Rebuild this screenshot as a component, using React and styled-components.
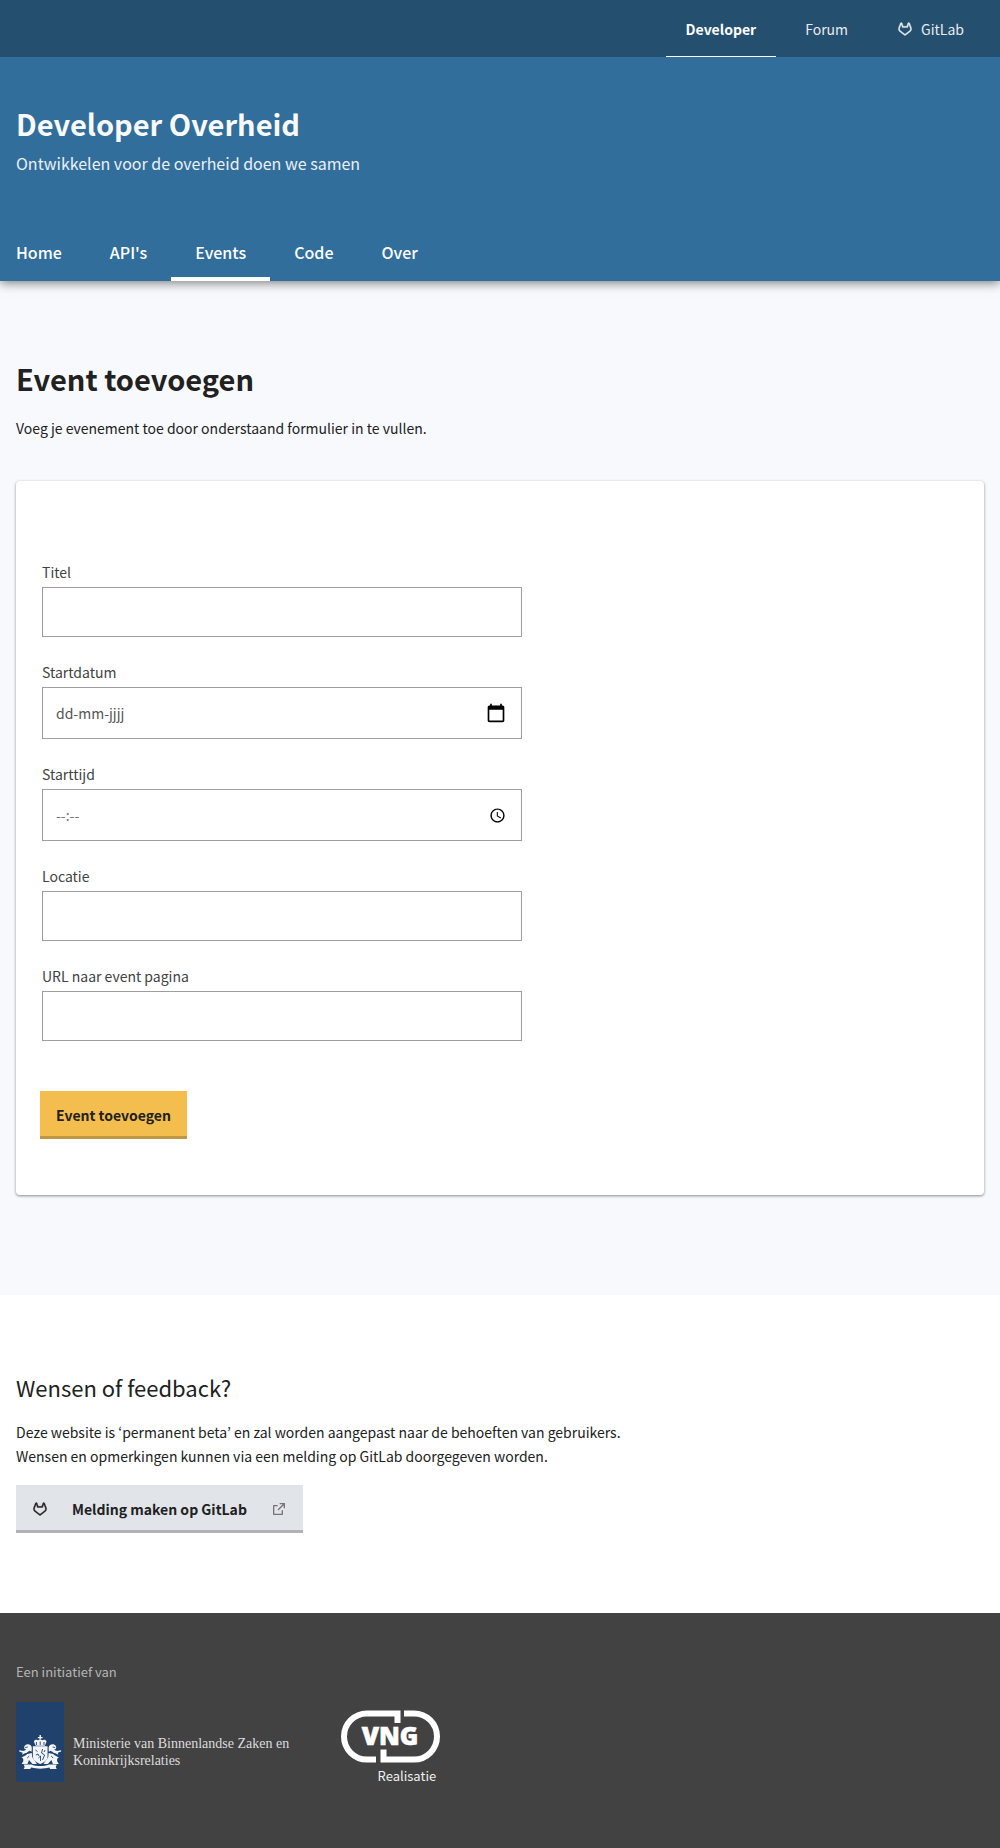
import React from 'react';
import styled, { createGlobalStyle } from 'styled-components';
import { RiGitlabLine, RiExternalLinkLine } from 'react-icons/ri';
import { MdCalendarToday, MdAccessTime } from 'react-icons/md';

const GlobalStyle = createGlobalStyle`
  *, *::before, *::after { box-sizing: border-box; }
  body {
    margin: 0;
    background: #424242;
    color: #212121;
    font: 400 14px/24px "Noto Sans CJK KR", "Open Sans", sans-serif;
  }
  h1, h2, p { margin: 0; }
  a { color: inherit; text-decoration: none; }
  button, input { font: inherit; color: inherit; }
`;

const TopBar = styled.nav`
  position: relative;
  z-index: 1;
  display: flex;
  justify-content: flex-end;
  gap: 9px;
  padding: 0 16px;
  background: #254f6e;
  color: #fff;
`;

const TopLink = styled.a`
  display: flex;
  align-items: center;
  gap: 8px;
  height: 57px;
  padding: 0 20px;
  font-weight: ${(p) => (p.$active ? 600 : 400)};
  color: ${(p) => (p.$active ? '#fff' : '#e6ecf0')};
  box-shadow: ${(p) => (p.$active ? 'inset 0 -1px #fff' : 'none')};
`;

const Header = styled.header`
  position: relative;
  padding: 46px 16px 0;
  background: #316e9c;
  color: #fff;
  box-shadow: 0 2px 10px rgba(0, 0, 0, 0.5);
`;

const SiteTitle = styled.p`
  font-size: 29px;
  line-height: 40px;
  font-weight: 700;
  color: #fafafa;
`;

const Tagline = styled.p`
  margin-top: 8px;
  font-size: 16px;
  color: #eaf0f5;
`;

const MainNav = styled.nav`
  display: flex;
  margin: 48px -24px 0;
`;

const NavLink = styled.a`
  display: flex;
  align-items: center;
  height: 58px;
  padding: 0 24px;
  font-size: 16px;
  font-weight: 500;
  box-shadow: ${(p) => (p.$active ? 'inset 0 -4px #fff' : 'none')};
`;

const Main = styled.main`
  padding: 77px 16px 100px;
  background: #f8f9fd;
`;

const PageTitle = styled.h1`
  font-size: 29px;
  line-height: 40px;
  font-weight: 700;
`;

const Intro = styled.p`
  margin: 18px 0 41px;
`;

const Card = styled.form`
  padding: 80px 24px 56px;
  background: #fff;
  border-radius: 4px;
  box-shadow: 0 1px 3px rgba(0, 0, 0, 0.45);
`;

const Fields = styled.div`
  display: grid;
  gap: 24px;
  max-width: 484px;
  padding: 0 2px;
  margin-bottom: 50px;
`;

const FieldGroup = styled.div`
  display: grid;
  gap: 4px;
  color: #424242;
`;

const Label = styled.label`
  line-height: 22px;
`;

const InputBox = styled.div`
  display: flex;
  align-items: center;
  height: ${(p) => (p.$picker ? 52 : 50)}px;
  padding-right: ${(p) => (p.$picker ? 15 : 0)}px;
  background: #fff;
  border: 1px solid #9e9e9e;
`;

const Input = styled.input`
  flex: 1;
  min-width: 0;
  height: 100%;
  padding: 0 13px;
  border: 0;
  background: none;
  outline-offset: 1px;
  &::placeholder { color: ${(p) => p.$hint || '#555'}; opacity: 1; }
`;

const PickerButton = styled.button`
  display: flex;
  padding: 0;
  border: 0;
  background: none;
  color: #000;
`;

const solidButton = `
  height: 48px;
  border: 0;
  color: #212121;
  font-weight: 600;
`;

const SubmitButton = styled.button`
  ${solidButton}
  padding: 0 16px;
  background: #f4be4e;
  box-shadow: inset 0 -3px #bf9742;
`;

const Feedback = styled.section`
  padding: 76px 16px 80px;
  background: #fff;
`;

const FeedbackTitle = styled.h2`
  font-size: 22px;
  line-height: 32px;
  font-weight: 400;
`;

const FeedbackText = styled.p`
  margin: 17px 0;
`;

const IssueLink = styled.a`
  ${solidButton}
  display: inline-flex;
  align-items: center;
  padding: 0 16px;
  vertical-align: top;
  background: #e1e5ea;
  box-shadow: inset 0 -3px #b0b2b7;
`;

const IssueText = styled.span`
  margin: 0 24px;
`;

const FoxIcon = styled(RiGitlabLine)`
  stroke: currentColor;
  stroke-width: 0.6px;
`;

const Footer = styled.footer`
  padding: 49px 16px 66px;
  background: #424242;
  color: #fff;
`;

const FooterNote = styled.p`
  font-size: 13px;
  line-height: 20px;
  color: #b5b5b5;
`;

const Partners = styled.div`
  display: flex;
  flex-wrap: wrap;
  gap: 51px;
  margin-top: 20px;
`;

const Ministry = styled.a`
  display: flex;
  gap: 9px;
  color: #dcdcdc;
`;

const MinistryName = styled.span`
  padding-top: 33px;
  font: 400 14px/17px "Liberation Serif", "Times New Roman", serif;
`;

const Vng = styled.a`
  display: flex;
  flex-direction: column;
  width: 100px;
  padding-top: 8px;
`;

const VngUnit = styled.span`
  padding-right: 4px;
  text-align: right;
  font-size: 13px;
  line-height: 26px;
  color: #f0f0f0;
`;

const Crest = () => (
  <svg width="48" height="80" viewBox="0 0 47 80" preserveAspectRatio="none" aria-hidden="true">
    <rect width="47" height="80" fill="#21416d" />
    <g fill="#f2f5f9">
      <path d="M23 33h1.400v2h1.600v1.200h-1.600v1.400h-1.400v-1.400h-1.600V35H23z" />
      <path d="M17.500 39.500c1-2.400 3.400-1.800 4-1.200 1.200-1 3-1 4.200 0 1.200-1 3.800-.6 4.300 1.200l-1.800 4.300h-9z" />
      <path d="M16.500 44.300h14.400v10c0 4-3.800 6.500-7.200 7.700-3.400-1.200-7.200-3.700-7.200-7.700z" />
      <path d="M15.500 45.500c-.5-2.500-3-3.800-5.200-3-2.200.8-2.900 2.800-1.800 4.600l1.500.4c-1.400 1.300-2.600 1.700-4.200 1.300L3.200 48.300v1.300l3.300 1.200-.5 2 2.700-1.500c2-.3 3.400-1.200 4.600-2.500l2 1zM11 52c-2 1.800-3.600 2.800-5.600 3.200 1.700 1 2.200 2.400 1.600 4.300L5.500 62h5.800l1.400-4 3.500 4h4.300l-4.700-7-.3-4z" />
      <path d="M31.900 45.500c.5-2.500 3-3.800 5.200-3 2.200.8 2.900 2.800 1.800 4.600l-1.500.4c1.400 1.300 2.600 1.700 4.200 1.300l2.600-.5v1.300l-3.300 1.200.5 2-2.700-1.500c-2-.3-3.400-1.200-4.600-2.500l-2 1zM36.400 52c2 1.800 3.600 2.800 5.600 3.200-1.700 1-2.200 2.400-1.600 4.300l1.500 2.500h-5.800l-1.400-4-3.500 4h-4.300l4.700-7 .3-4z" />
      <path d="M7.500 62.500h7.500c5.500 2 12 2 17.400 0h7.500l-1 2.500 1 2h-6.500l-.7-1.500c-5.500 1.500-12.500 1.500-18 0l-.7 1.500H7.500l1-2z" />
    </g>
    <g stroke="#21416d" fill="none" strokeWidth=".9">
      <path d="M19 48l2 1.500M19.500 53l2-1 1 2M26 47l-1 4 3 2-2 5M22 56l2-2v5M28.500 48l-1 2" />
      <path d="M9 45.500l2.500-.5M12.500 49.500l-2 2M35 49.500l2 2M38.400 45.500l-2.500-.5M11 56l2-2M36.400 56l-2-2" />
      <path d="M20 40v3M23.700 39.500v3.500M27.400 40v3" />
    </g>
  </svg>
);

const VngLogo = () => (
  <svg width="100" height="53" viewBox="0 0 100 53" aria-label="VNG" role="img">
    <g fill="none" stroke="#fff" strokeWidth="6">
      <path d="M57.500 13V3.500H27a23 23 0 0 0 0 46H36" />
      <path d="M64 3.500H74a23 23 0 0 1 0 46H43.500V39.500" />
    </g>
    <text x="50" y="35" textAnchor="middle" fill="#fff" stroke="#fff" strokeWidth=".6" fontFamily="'Noto Sans', sans-serif" fontWeight="900" fontSize="25">VNG</text>
  </svg>
);

const fields = [
  { id: 'titel', label: 'Titel' },
  { id: 'startdatum', label: 'Startdatum', placeholder: 'dd-mm-jjjj', picker: MdCalendarToday, pickerSize: 20, action: 'Kies datum' },
  { id: 'starttijd', label: 'Starttijd', placeholder: '--:--', hint: '#757575', picker: MdAccessTime, pickerSize: 17, action: 'Kies tijd' },
  { id: 'locatie', label: 'Locatie' },
  { id: 'url', label: 'URL naar event pagina' },
];

const Field = ({ id, label, placeholder, hint, picker: Picker, pickerSize, action }) => (
  <FieldGroup>
    <Label htmlFor={id}>{label}</Label>
    <InputBox $picker={Boolean(Picker)}>
      <Input id={id} name={id} type="text" placeholder={placeholder} $hint={hint} />
      {Picker && (
        <PickerButton type="button" aria-label={action}>
          <Picker size={pickerSize} />
        </PickerButton>
      )}
    </InputBox>
  </FieldGroup>
);

export default function App() {
  return (
    <>
      <GlobalStyle />
      <TopBar>
        <TopLink href="#developer" $active>Developer</TopLink>
        <TopLink href="#forum">Forum</TopLink>
        <TopLink href="#gitlab"><FoxIcon size={16} />GitLab</TopLink>
      </TopBar>
      <Header>
        <SiteTitle>Developer Overheid</SiteTitle>
        <Tagline>Ontwikkelen voor de overheid doen we samen</Tagline>
        <MainNav>
          <NavLink href="#home">Home</NavLink>
          <NavLink href="#apis">API's</NavLink>
          <NavLink href="#events" $active>Events</NavLink>
          <NavLink href="#code">Code</NavLink>
          <NavLink href="#over">Over</NavLink>
        </MainNav>
      </Header>
      <Main>
        <PageTitle>Event toevoegen</PageTitle>
        <Intro>Voeg je evenement toe door onderstaand formulier in te vullen.</Intro>
        <Card onSubmit={(e) => e.preventDefault()}>
          <Fields>
            {fields.map((f) => <Field key={f.id} {...f} />)}
          </Fields>
          <SubmitButton type="submit">Event toevoegen</SubmitButton>
        </Card>
      </Main>
      <Feedback>
        <FeedbackTitle>Wensen of feedback?</FeedbackTitle>
        <FeedbackText>
          Deze website is ‘permanent beta’ en zal worden aangepast naar de behoeften van gebruikers.
          <br />
          Wensen en opmerkingen kunnen via een melding op GitLab doorgegeven worden.
        </FeedbackText>
        <IssueLink href="#melding">
          <FoxIcon size={16} />
          <IssueText>Melding maken op GitLab</IssueText>
          <RiExternalLinkLine size={16} color="#757575" />
        </IssueLink>
      </Feedback>
      <Footer>
        <FooterNote>Een initiatief van</FooterNote>
        <Partners>
          <Ministry href="#bzk">
            <Crest />
            <MinistryName>
              Ministerie van Binnenlandse Zaken en
              <br />
              Koninkrijksrelaties
            </MinistryName>
          </Ministry>
          <Vng href="#vng">
            <VngLogo />
            <VngUnit>Realisatie</VngUnit>
          </Vng>
        </Partners>
      </Footer>
    </>
  );
}
